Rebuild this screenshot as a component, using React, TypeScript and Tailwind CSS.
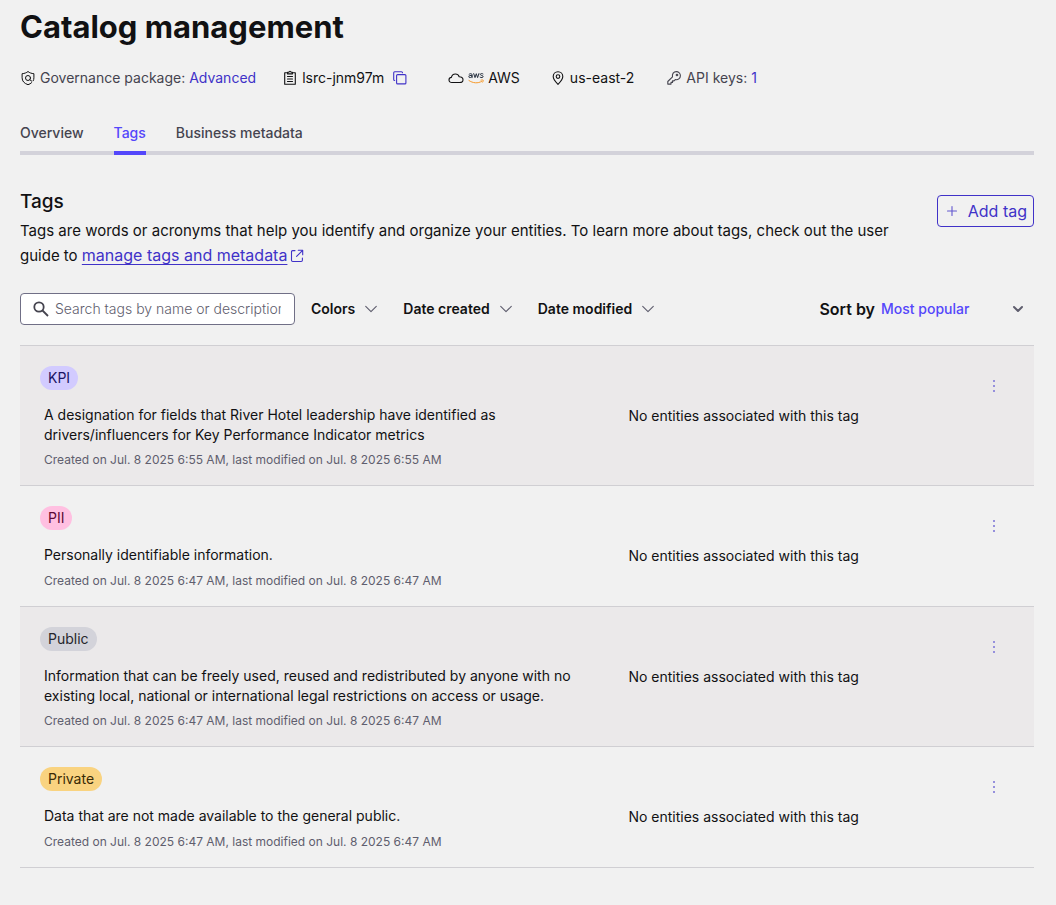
import type { ReactNode } from "react";

type Tag = {
  name: string;
  badge: string;
  description: string;
  meta: string;
};

const tags: Tag[] = [
  {
    name: "KPI",
    badge: "bg-[#d2cbff] text-[#1b1464]",
    description:
      "A designation for fields that River Hotel leadership have identified as drivers/influencers for Key Performance Indicator metrics",
    meta: "Created on Jul. 8 2025 6:55 AM, last modified on Jul. 8 2025 6:55 AM",
  },
  {
    name: "PII",
    badge: "bg-[#ffc0e1] text-[#5c0a35]",
    description: "Personally identifiable information.",
    meta: "Created on Jul. 8 2025 6:47 AM, last modified on Jul. 8 2025 6:47 AM",
  },
  {
    name: "Public",
    badge: "bg-[#d3d3da] text-[#26262b]",
    description:
      "Information that can be freely used, reused and redistributed by anyone with no existing local, national or international legal restrictions on access or usage.",
    meta: "Created on Jul. 8 2025 6:47 AM, last modified on Jul. 8 2025 6:47 AM",
  },
  {
    name: "Private",
    badge: "bg-[#f9d380] text-[#3a2a05]",
    description: "Data that are not made available to the general public.",
    meta: "Created on Jul. 8 2025 6:47 AM, last modified on Jul. 8 2025 6:47 AM",
  },
];

function Icon({ className, box = "0 0 16 16", children }: { className: string; box?: string; children: ReactNode }) {
  return (
    <svg
      viewBox={box}
      className={`shrink-0 ${className}`}
      fill="none"
      stroke="currentColor"
      strokeWidth="1.1"
      strokeLinecap="round"
      strokeLinejoin="round"
      aria-hidden="true"
    >
      {children}
    </svg>
  );
}

function ShieldIcon() {
  return (
    <Icon className="size-4 text-[#111113]">
      <path
        d="M11.600 12.700C10.700 13.600 9.500 14.200 8 14.700 4.200 13.400 2.100 11.200 2.100 7.800V3.700C4.500 3.500 6.500 2.800 8 1.500c1.500 1.300 3.500 2 5.900 2.200v4.100c0 1.200-.2 2.200-.7 3"
        strokeWidth="1"
      />
      <circle cx="8" cy="8" r="2.500" strokeWidth="1" />
      <path d="m9.900 9.800 1.900 1.400" strokeWidth="1" />
    </Icon>
  );
}

function ClipboardIcon() {
  return (
    <Icon className="size-4">
      <path d="M5.500 2.700H2.700v11.600h10.600V2.700h-2.800" />
      <path d="M5.600 3.900V2.300h1.200C7 1.500 7.400 1.200 8 1.200s1 .3 1.200 1.100h1.200v1.600z" />
      <path d="M5.500 6.500h5M5.500 9h5M5.500 11.500h5" />
    </Icon>
  );
}

function CopyIcon() {
  return (
    <Icon className="size-4">
      <path d="M5.600 4.600h7.300c.6 0 1 .4 1 1v7.300c0 .6-.4 1-1 1H5.600c-.6 0-1-.4-1-1V5.600c0-.6.4-1 1-1zM2.700 10.500c-.6 0-1-.4-1-1V2.700c0-.6.4-1 1-1h6.800c.6 0 1 .4 1 1" />
    </Icon>
  );
}

function CloudIcon() {
  return (
    <Icon className="size-4">
      <path d="M4 12.500C2.200 12.500 1 11.500 1 10s1-2.500 2.400-2.600C3.800 5.200 5.300 4 7.400 4c1.900 0 3.200 1 3.800 2.700 2.300.1 3.800 1.200 3.800 3 0 1.700-1.300 2.800-3.300 2.800z" />
    </Icon>
  );
}

function AwsLogo() {
  return (
    <svg viewBox="0 0 16 12" className="h-3 w-4 shrink-0" fill="none" strokeLinecap="round" strokeLinejoin="round" aria-hidden="true">
      <g stroke="#252f3e" strokeWidth="1">
        <path d="M1 2.300C1.700 1.500 4 1.200 4 2.700v3M4 3.600C2.700 3.200.8 3.400.8 4.700c0 1.400 2.500 1.200 3.200-.2" />
        <path d="M5.700 1.600 7 5.600 8.300 1.700l1.300 3.900 1.300-4" />
        <path d="M15 1.900c-.9-.6-2.700-.5-2.700.5 0 1.400 2.800.7 2.800 2.100 0 1.300-1.900 1.400-3 .7" />
      </g>
      <path d="M.9 8.500c4 2.800 9 3.100 12.700.9M13 8.100c.8-.2 1.900-.3 2.200.1.200.4-.1 1.300-.6 2" stroke="#f79a2a" strokeWidth="1" />
    </svg>
  );
}

function PinIcon() {
  return (
    <Icon className="size-4">
      <path d="M8 14.300C5 11.400 3.200 9 3.200 6.600 3.200 3.800 5.300 1.800 8 1.800s4.800 2 4.800 4.800c0 2.400-1.800 4.800-4.800 7.700z" />
      <circle cx="8" cy="6.600" r="1.800" />
    </Icon>
  );
}

function KeyIcon() {
  return (
    <Icon className="size-4">
      <path d="M6.500 6.800C5.900 4 7.600 1.600 10.300 1.600c2.300 0 4.100 1.800 4.100 4.100 0 2.700-2.400 4.500-5.100 3.900L8 10.900H6.500v1.500H5v1.700H1.800v-2.600z" />
      <circle cx="11" cy="5" r=".8" />
    </Icon>
  );
}

function ExternalIcon() {
  return (
    <Icon className="ml-[2px] inline size-4 align-[-3px] text-[#4032c8]">
      <path d="M6 2.600H3.700c-.7 0-1.200.5-1.200 1.200v8.500c0 .7.500 1.200 1.200 1.200h8.500c.7 0 1.200-.5 1.200-1.200V10M9.300 2.300h4.400v4.400M13.400 2.600 7.600 8.400" />
    </Icon>
  );
}

function Chevron({ className = "" }: { className?: string }) {
  return (
    <Icon className={`size-4 ${className}`}>
      <path d="m2.700 5.300 5.300 5.400 5.300-5.400" />
    </Icon>
  );
}

function TagRow({ tag, shaded }: { tag: Tag; shaded: boolean }) {
  return (
    <li
      className={`grid grid-cols-[60%_1fr_auto] border-t border-[#d0cfd3] pt-5 pb-[17px] last:border-b ${
        shaded ? "bg-[#ebe9ea]" : ""
      }`}
    >
      <div className="flex flex-col items-start pl-5">
        <span className={`h-6 rounded-full px-2 text-sm leading-6 ${tag.badge}`}>{tag.name}</span>
        <p className="mt-[15px] min-h-[21px] max-w-[540px] pl-1 text-sm leading-5 text-[#111113]">{tag.description}</p>
        <p className="mt-[7px] pl-1 text-xs leading-4 text-[#5f5e6e]">{tag.meta}</p>
      </div>
      <p className="pt-10 text-sm leading-5">No entities associated with this tag</p>
      <button type="button" aria-label={`Actions for ${tag.name}`} className="mt-2 mr-7 flex size-6 items-center justify-center text-[#9690dc]">
        <svg viewBox="0 0 2 12" className="h-3 w-[2px]" fill="currentColor" aria-hidden="true">
          <path d="M0 0h2v2H0zM0 5h2v2H0zM0 10h2v2H0z" />
        </svg>
      </button>
    </li>
  );
}

export default function App() {
  return (
    <div className="min-h-screen bg-[#f1f1f1] pr-[22px] pb-9 pl-5 font-['Inter',sans-serif] text-[#111113]">
      <header className="pt-[7px]">
        <h1 className="text-[31px] leading-10 font-bold">Catalog management</h1>
        <div className="mt-[21px] flex items-center text-sm leading-5">
          <div className="flex items-center gap-1 text-[#45444f]">
            <ShieldIcon />
            <span>
              Governance package: <a href="#package" className="text-[#4032c8]">Advanced</a>
            </span>
          </div>
          <div className="ml-[26px] flex items-center gap-1">
            <ClipboardIcon />
            <span>lsrc-jnm97m</span>
            <button type="button" aria-label="Copy ID" className="ml-1 text-[#4032c8]">
              <CopyIcon />
            </button>
          </div>
          <div className="ml-10 flex items-center gap-1">
            <CloudIcon />
            <AwsLogo />
            <span>AWS</span>
          </div>
          <div className="ml-[30px] flex items-center gap-1">
            <PinIcon />
            <span>us-east-2</span>
          </div>
          <div className="ml-8 flex items-center gap-1 text-[#45444f]">
            <KeyIcon />
            <span>
              API keys: <a href="#keys" className="text-[#4032c8]">1</a>
            </span>
          </div>
        </div>
      </header>

      <nav className="mt-[35px] flex gap-[30px] border-b-4 border-[#d3d2da] text-sm leading-5 font-medium text-[#45444f]">
        <a href="#overview" className="pb-2">Overview</a>
        <a href="#tags" aria-current="page" className="-mb-1 border-b-4 border-[#5447fb] pb-2 text-[#5447fb]">
          Tags
        </a>
        <a href="#metadata" className="pb-2">Business metadata</a>
      </nav>

      <main>
        <section className="mt-[33px] flex items-start justify-between gap-6">
          <div>
            <h2 className="text-[19px] leading-7 font-medium">Tags</h2>
            <p className="mt-[3px] text-[15px] leading-6">
              Tags are words or acronyms that help you identify and organize your entities. To learn more about tags, check out the user guide to{" "}
              <a href="#guide" className="text-base leading-6 text-[#4032c8] underline underline-offset-3">
                manage tags and metadata
              </a>
              <ExternalIcon />
            </p>
          </div>
          <button
            type="button"
            className="mt-[7px] flex h-8 shrink-0 items-center gap-2 rounded border border-[#4032c8] px-[6px] text-base text-[#4032c8]"
          >
            <Icon className="size-4 opacity-80">
              <path d="M8 3.500v9M3.500 8h9" />
            </Icon>
            Add tag
          </button>
        </section>

        <div className="mt-[25px] flex h-8 items-center text-sm font-semibold">
          <label className="flex h-8 w-[275px] items-center gap-[6px] rounded border border-[#706f86] bg-white pr-[13px] pl-3">
            <svg viewBox="0 0 16 16" className="size-4 shrink-0" fill="none" stroke="#45444f" strokeWidth="1.800" aria-hidden="true">
              <circle cx="6" cy="6" r="4.700" />
              <path d="m9.500 9.500 5.500 5.500" />
            </svg>
            <input
              type="text"
              aria-label="Search tags"
              placeholder="Search tags by name or description"
              className="w-full min-w-0 bg-transparent text-sm font-light outline-none placeholder:text-[#5f5e6e]"
            />
          </label>
          <div className="ml-4 flex items-center gap-6">
            {["Colors", "Date created", "Date modified"].map((label) => (
              <button key={label} type="button" className="flex items-center gap-2">
                {label}
                <Chevron className="text-[#5f5e6e]" />
              </button>
            ))}
          </div>
          <div className="ml-auto flex items-center gap-[6px]">
            <label htmlFor="sort" className="text-base">Sort by</label>
            <div className="grid items-center">
              <select
                id="sort"
                className="col-start-1 row-start-1 w-[153px] appearance-none bg-transparent text-sm font-medium text-[#5447fb] outline-none"
              >
                <option>Most popular</option>
              </select>
              <Icon className="pointer-events-none col-start-1 row-start-1 mr-[10px] size-3 justify-self-end text-[#5f5e6e]" box="0 0 12 12">
                <path d="m2 4 4 4 4-4" strokeWidth="2" />
              </Icon>
            </div>
          </div>
        </div>

        <ul className="mt-5">
          {tags.map((tag, index) => (
            <TagRow key={tag.name} tag={tag} shaded={index % 2 === 0} />
          ))}
        </ul>
      </main>
    </div>
  );
}
